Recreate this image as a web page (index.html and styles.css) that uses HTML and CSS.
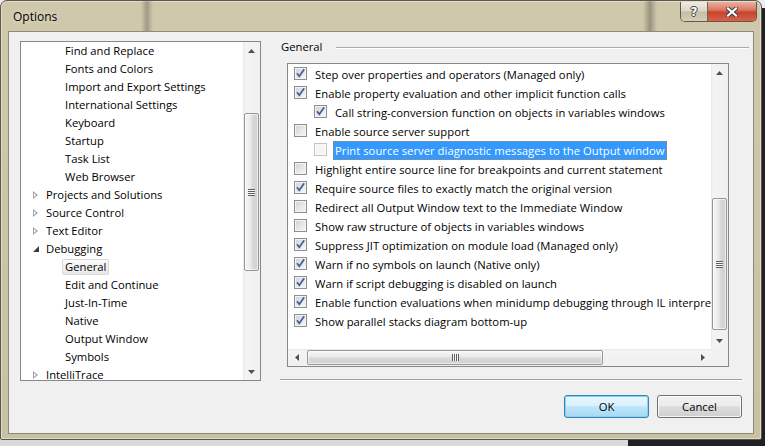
FILE: index.html
```html
<!DOCTYPE html>
<html lang="en">
<head>
  <meta charset="UTF-8">
  <title>Options</title>
  <link rel="stylesheet" href="styles.css">
</head>
<body>

<div class="window">
  <div class="titlebar">
    <span class="title">Options</span>
    <div class="caption-buttons">
      <div class="cap-btn help"><span>?</span></div>
      <div class="cap-btn close">
        <svg width="12" height="10" viewBox="0 0 12 10">
          <path d="M2 1.5 L10 8.5 M10 1.5 L2 8.5" stroke="#3b3b3b" stroke-width="4" stroke-linecap="square"/>
          <path d="M2 1.5 L10 8.5 M10 1.5 L2 8.5" stroke="#fff" stroke-width="2.2" stroke-linecap="square"/>
        </svg>
      </div>
    </div>
  </div>

  <div class="client">
    <!-- category tree -->
    <div class="tree">
      <div class="tree-items">
        <div class="node sub"><span class="label">Find and Replace</span></div>
        <div class="node sub"><span class="label">Fonts and Colors</span></div>
        <div class="node sub"><span class="label">Import and Export Settings</span></div>
        <div class="node sub"><span class="label">International Settings</span></div>
        <div class="node sub"><span class="label">Keyboard</span></div>
        <div class="node sub"><span class="label">Startup</span></div>
        <div class="node sub"><span class="label">Task List</span></div>
        <div class="node sub"><span class="label">Web Browser</span></div>
        <div class="node"><span class="expander closed"></span><span class="label">Projects and Solutions</span></div>
        <div class="node"><span class="expander closed"></span><span class="label">Source Control</span></div>
        <div class="node"><span class="expander closed"></span><span class="label">Text Editor</span></div>
        <div class="node"><span class="expander open"></span><span class="label">Debugging</span></div>
        <div class="node sub"><span class="label selected">General</span></div>
        <div class="node sub"><span class="label">Edit and Continue</span></div>
        <div class="node sub"><span class="label">Just-In-Time</span></div>
        <div class="node sub"><span class="label">Native</span></div>
        <div class="node sub"><span class="label">Output Window</span></div>
        <div class="node sub"><span class="label">Symbols</span></div>
        <div class="node"><span class="expander closed"></span><span class="label">IntelliTrace</span></div>
      </div>
      <div class="vscroll tree-scroll">
        <div class="arrow"><svg width="7" height="4"><path d="M0 4 L3.5 0 L7 4Z" fill="#505050"/></svg></div>
        <div class="track"><div class="thumb"><span class="grip"></span></div></div>
        <div class="arrow"><svg width="7" height="4"><path d="M0 0 L3.5 4 L7 0Z" fill="#505050"/></svg></div>
      </div>
    </div>

    <!-- General page -->
    <div class="page">
      <div class="group-title">
        <span>General</span>
        <div class="rule"></div>
      </div>

      <div class="listbox">
        <div class="list-items">
          <div class="opt"><span class="cb"><svg viewBox="0 0 11 11"><path d="M2 5.2 L4.3 8.3 L9.2 1.2" class="tick"/></svg></span><span class="text">Step over properties and operators (Managed only)</span></div>
          <div class="opt"><span class="cb"><svg viewBox="0 0 11 11"><path d="M2 5.2 L4.3 8.3 L9.2 1.2" class="tick"/></svg></span><span class="text">Enable property evaluation and other implicit function calls</span></div>
          <div class="opt child"><span class="cb"><svg viewBox="0 0 11 11"><path d="M2 5.2 L4.3 8.3 L9.2 1.2" class="tick"/></svg></span><span class="text">Call string-conversion function on objects in variables windows</span></div>
          <div class="opt"><span class="cb"></span><span class="text">Enable source server support</span></div>
          <div class="opt child"><span class="cb disabled"></span><span class="text selected">Print source server diagnostic messages to the Output window</span></div>
          <div class="opt"><span class="cb"></span><span class="text">Highlight entire source line for breakpoints and current statement</span></div>
          <div class="opt"><span class="cb"><svg viewBox="0 0 11 11"><path d="M2 5.2 L4.3 8.3 L9.2 1.2" class="tick"/></svg></span><span class="text">Require source files to exactly match the original version</span></div>
          <div class="opt"><span class="cb"></span><span class="text">Redirect all Output Window text to the Immediate Window</span></div>
          <div class="opt"><span class="cb"></span><span class="text">Show raw structure of objects in variables windows</span></div>
          <div class="opt"><span class="cb"><svg viewBox="0 0 11 11"><path d="M2 5.2 L4.3 8.3 L9.2 1.2" class="tick"/></svg></span><span class="text">Suppress JIT optimization on module load (Managed only)</span></div>
          <div class="opt"><span class="cb"><svg viewBox="0 0 11 11"><path d="M2 5.2 L4.3 8.3 L9.2 1.2" class="tick"/></svg></span><span class="text">Warn if no symbols on launch (Native only)</span></div>
          <div class="opt"><span class="cb"><svg viewBox="0 0 11 11"><path d="M2 5.2 L4.3 8.3 L9.2 1.2" class="tick"/></svg></span><span class="text">Warn if script debugging is disabled on launch</span></div>
          <div class="opt"><span class="cb"><svg viewBox="0 0 11 11"><path d="M2 5.2 L4.3 8.3 L9.2 1.2" class="tick"/></svg></span><span class="text">Enable function evaluations when minidump debugging through IL interpreter</span></div>
          <div class="opt"><span class="cb"><svg viewBox="0 0 11 11"><path d="M2 5.2 L4.3 8.3 L9.2 1.2" class="tick"/></svg></span><span class="text">Show parallel stacks diagram bottom-up</span></div>
        </div>

        <div class="vscroll list-scroll">
          <div class="arrow"><svg width="7" height="4"><path d="M0 4 L3.5 0 L7 4Z" fill="#505050"/></svg></div>
          <div class="track"><div class="thumb"><span class="grip"></span></div></div>
          <div class="arrow"><svg width="7" height="4"><path d="M0 0 L3.5 4 L7 0Z" fill="#505050"/></svg></div>
        </div>

        <div class="hscroll">
          <div class="arrow"><svg width="4" height="7"><path d="M4 0 L0 3.5 L4 7Z" fill="#505050"/></svg></div>
          <div class="track"><div class="thumb"><span class="grip"></span></div></div>
          <div class="arrow"><svg width="4" height="7"><path d="M0 0 L4 3.5 L0 7Z" fill="#505050"/></svg></div>
        </div>

        <div class="corner"></div>
      </div>

      <div class="separator"></div>

      <div class="buttons">
        <div class="btn default">OK</div>
        <div class="btn">Cancel</div>
      </div>
    </div>
  </div>
</div>

</body>
</html>
```

FILE: styles.css
```css
* {
  margin: 0;
  padding: 0;
  box-sizing: border-box;
}

body {
  width: 765px;
  height: 446px;
  overflow: hidden;
  font-family: 'Open Sans', 'Noto Sans', sans-serif;
  font-size: 11.25px;
  color: #000;
  background:
    linear-gradient(#ececec 0 8px, transparent 8px),
    linear-gradient(to right, #dadada 0 628px, #1f2127 628px);
}

/* window frame */
.window {
  width: 762px;
  height: 440px;
  border: 1px solid #5b574b;
  border-radius: 7px 7px 2px 2px;
  background: linear-gradient(#d0c8ab, #c9c1a3);
  box-shadow: inset 0 0 0 1px rgba(255, 255, 255, 0.4);
  display: flex;
  flex-direction: column;
}

.titlebar {
  height: 30px;
  display: flex;
  align-items: flex-start;
  padding-left: 12px;
  border-radius: 6px 6px 0 0;
  background:
    linear-gradient(to right,
      transparent 140px, rgba(50, 50, 45, 0.3) 146px, transparent 152px,
      transparent 642px, rgba(50, 50, 45, 0.35) 649px, transparent 656px);
}

.title {
  margin-top: 8px;
  line-height: 16px;
  font-size: 12px;
  text-shadow: 0 0 6px rgba(255, 255, 255, 0.7);
}

.caption-buttons {
  margin-left: auto;
  margin-right: 4px;
  margin-top: 1px;
  display: flex;
  border: 1px solid #5d5a52;
  border-top: none;
  border-radius: 0 0 5px 5px;
  overflow: hidden;
}

.cap-btn {
  height: 19px;
  display: flex;
  align-items: center;
  justify-content: center;
}

.cap-btn.help {
  width: 27px;
  border-right: 1px solid #6c6558;
  background: linear-gradient(#eeebe2 0%, #dcd7c8 45%, #c5bda5 55%, #d6cfb9 100%);
}

.cap-btn.help span {
  font-family: 'DejaVu Sans', sans-serif;
  font-weight: bold;
  font-size: 12px;
  color: #fff;
  text-shadow: 1px 0 0 #3e3e3e, -1px 0 0 #3e3e3e, 0 1px 0 #3e3e3e, 0 -1px 0 #3e3e3e;
}

.cap-btn.close {
  width: 48px;
  background: linear-gradient(#eab0a2 0%, #dc7a66 40%, #c8432c 55%, #d8614a 100%);
}

/* client area */
.client {
  height: 403px;
  margin: 0 7px;
  border: 1px solid #8f8b7c;
  background: #f0f0f0;
  display: flex;
  align-items: flex-start;
}

/* category tree */
.tree {
  width: 241px;
  height: 340px;
  margin: 9px 0 0 11px;
  border: 1px solid #828790;
  background: #fff;
  display: flex;
}

.tree-items {
  flex: 1;
  overflow: hidden;
}

.node {
  height: 18px;
  display: flex;
  align-items: center;
  padding-left: 6px;
  white-space: nowrap;
}

.node.sub {
  padding-left: 41px;
}

.expander {
  width: 16px;
  height: 18px;
  position: relative;
}

.expander.closed::before {
  content: '';
  position: absolute;
  left: 6px;
  top: 5px;
  border-left: 5px solid #a3a3a3;
  border-top: 4px solid transparent;
  border-bottom: 4px solid transparent;
}

.expander.closed::after {
  content: '';
  position: absolute;
  left: 7px;
  top: 7px;
  border-left: 2px solid #fff;
  border-top: 2px solid transparent;
  border-bottom: 2px solid transparent;
}

.expander.open::before {
  content: '';
  position: absolute;
  left: 6px;
  top: 6px;
  border-right: 6px solid #3c3c3c;
  border-top: 6px solid transparent;
}

.label {
  height: 16px;
  line-height: 14px;
  padding: 0 2px;
  border: 1px solid transparent;
  border-radius: 2px;
}

.label.selected {
  border-color: #d9d9d9;
  background: linear-gradient(#fafafa, #e8e8e8);
}

/* scrollbars */
.vscroll {
  width: 17px;
  display: flex;
  flex-direction: column;
  background: linear-gradient(to right, #e6e6e6, #f4f4f4 2px, #f0f0f0);
}

.vscroll .arrow,
.hscroll .arrow {
  flex: none;
  width: 17px;
  height: 17px;
  display: flex;
  align-items: center;
  justify-content: center;
}

.vscroll .track {
  flex: 1;
}

.vscroll .thumb {
  width: 15px;
  margin-left: 1px;
  border: 1px solid #979797;
  border-radius: 2px;
  background: linear-gradient(to right, #f6f6f6, #e9e9e9 45%, #d9d9d9 55%, #d0d0d0);
  box-shadow: inset 0 0 0 1px rgba(255, 255, 255, 0.6);
  display: flex;
  align-items: center;
  justify-content: center;
}

.vscroll .grip {
  width: 7px;
  height: 7px;
  background: repeating-linear-gradient(#5f5f5f 0 1px, #f8f8f8 1px 2px);
}

.tree-scroll .thumb {
  margin-top: 54px;
  height: 158px;
}

.list-scroll .thumb {
  margin-top: 117px;
  height: 132px;
}

.hscroll {
  display: flex;
  background: linear-gradient(#e6e6e6, #f4f4f4 2px, #f0f0f0);
}

.hscroll .track {
  flex: 1;
}

.hscroll .thumb {
  width: 296px;
  height: 15px;
  margin: 1px 0 0 2px;
  border: 1px solid #979797;
  border-radius: 2px;
  background: linear-gradient(#f6f6f6, #e9e9e9 45%, #d9d9d9 55%, #d0d0d0);
  box-shadow: inset 0 0 0 1px rgba(255, 255, 255, 0.6);
  display: flex;
  align-items: center;
  justify-content: center;
}

.hscroll .grip {
  width: 7px;
  height: 7px;
  background: repeating-linear-gradient(to right, #5f5f5f 0 1px, #f8f8f8 1px 2px);
}

/* right side page */
.page {
  width: 462px;
  margin-left: 19px;
  padding-top: 7px;
  display: flex;
  flex-direction: column;
}

.group-title {
  height: 16px;
  line-height: 16px;
  padding-left: 1px;
  display: flex;
  align-items: center;
  margin-right: -7px;
}

.group-title .rule {
  flex: 1;
  margin-left: 14px;
  margin-top: 1px;
  border-top: 1px solid #a9a9a9;
  border-bottom: 1px solid #fff;
}

.listbox {
  width: 442px;
  height: 304px;
  margin: 8px 0 0 7px;
  border: 1px solid #828790;
  background: #fff;
  display: grid;
  grid-template-columns: 1fr 17px;
  grid-template-rows: 1fr 17px;
}

.list-items {
  overflow: hidden;
  padding-top: 1px;
}

.corner {
  background: #f0f0f0;
}

.opt {
  height: 19px;
  display: flex;
  align-items: center;
  padding-left: 6px;
  white-space: nowrap;
  letter-spacing: 0.03px;
}

.opt.child {
  padding-left: 26px;
}

.cb {
  flex: none;
  width: 13px;
  height: 13px;
  margin: -2px 6px 0 0;
  border: 1px solid #8e8f8f;
  background: linear-gradient(135deg, #cfd2d6, #f8f8f8);
  box-shadow: inset 0 0 0 1px #f3f3f3;
  display: flex;
}

.cb svg {
  width: 11px;
  height: 11px;
}

.cb .tick {
  fill: none;
  stroke: #475d93;
  stroke-width: 1.7;
}

.cb.disabled {
  border-color: #c4c4c4;
  background: #f5f5f5;
  box-shadow: inset 0 0 0 1px #fbfbfb;
}

.text {
  height: 19px;
  line-height: 17px;
  padding: 0 1px;
  border: 1px solid transparent;
}

.text.selected {
  background: #3399ff;
  color: #fff;
  border: 1px dotted #b88550;
}

.separator {
  margin-top: 12px;
  border-top: 1px solid #a0a0a0;
  border-bottom: 1px solid #fff;
}

.buttons {
  margin-top: 14px;
  display: flex;
  justify-content: flex-end;
  gap: 8px;
}

.btn {
  width: 85px;
  height: 23px;
  line-height: 21px;
  text-align: center;
  border: 1px solid #707070;
  border-radius: 3px;
  background: linear-gradient(#f2f2f2 0%, #ebebeb 50%, #dddddd 50%, #cfcfcf 100%);
  box-shadow: inset 0 0 0 1px rgba(255, 255, 255, 0.8);
}

.btn.default {
  border-color: #3c7fb1;
  background: linear-gradient(#eaf6fd 0%, #d9f0fc 50%, #bee6fd 50%, #a7d9f5 100%);
  box-shadow: inset 0 0 0 1px #7fd6f7;
}
```
